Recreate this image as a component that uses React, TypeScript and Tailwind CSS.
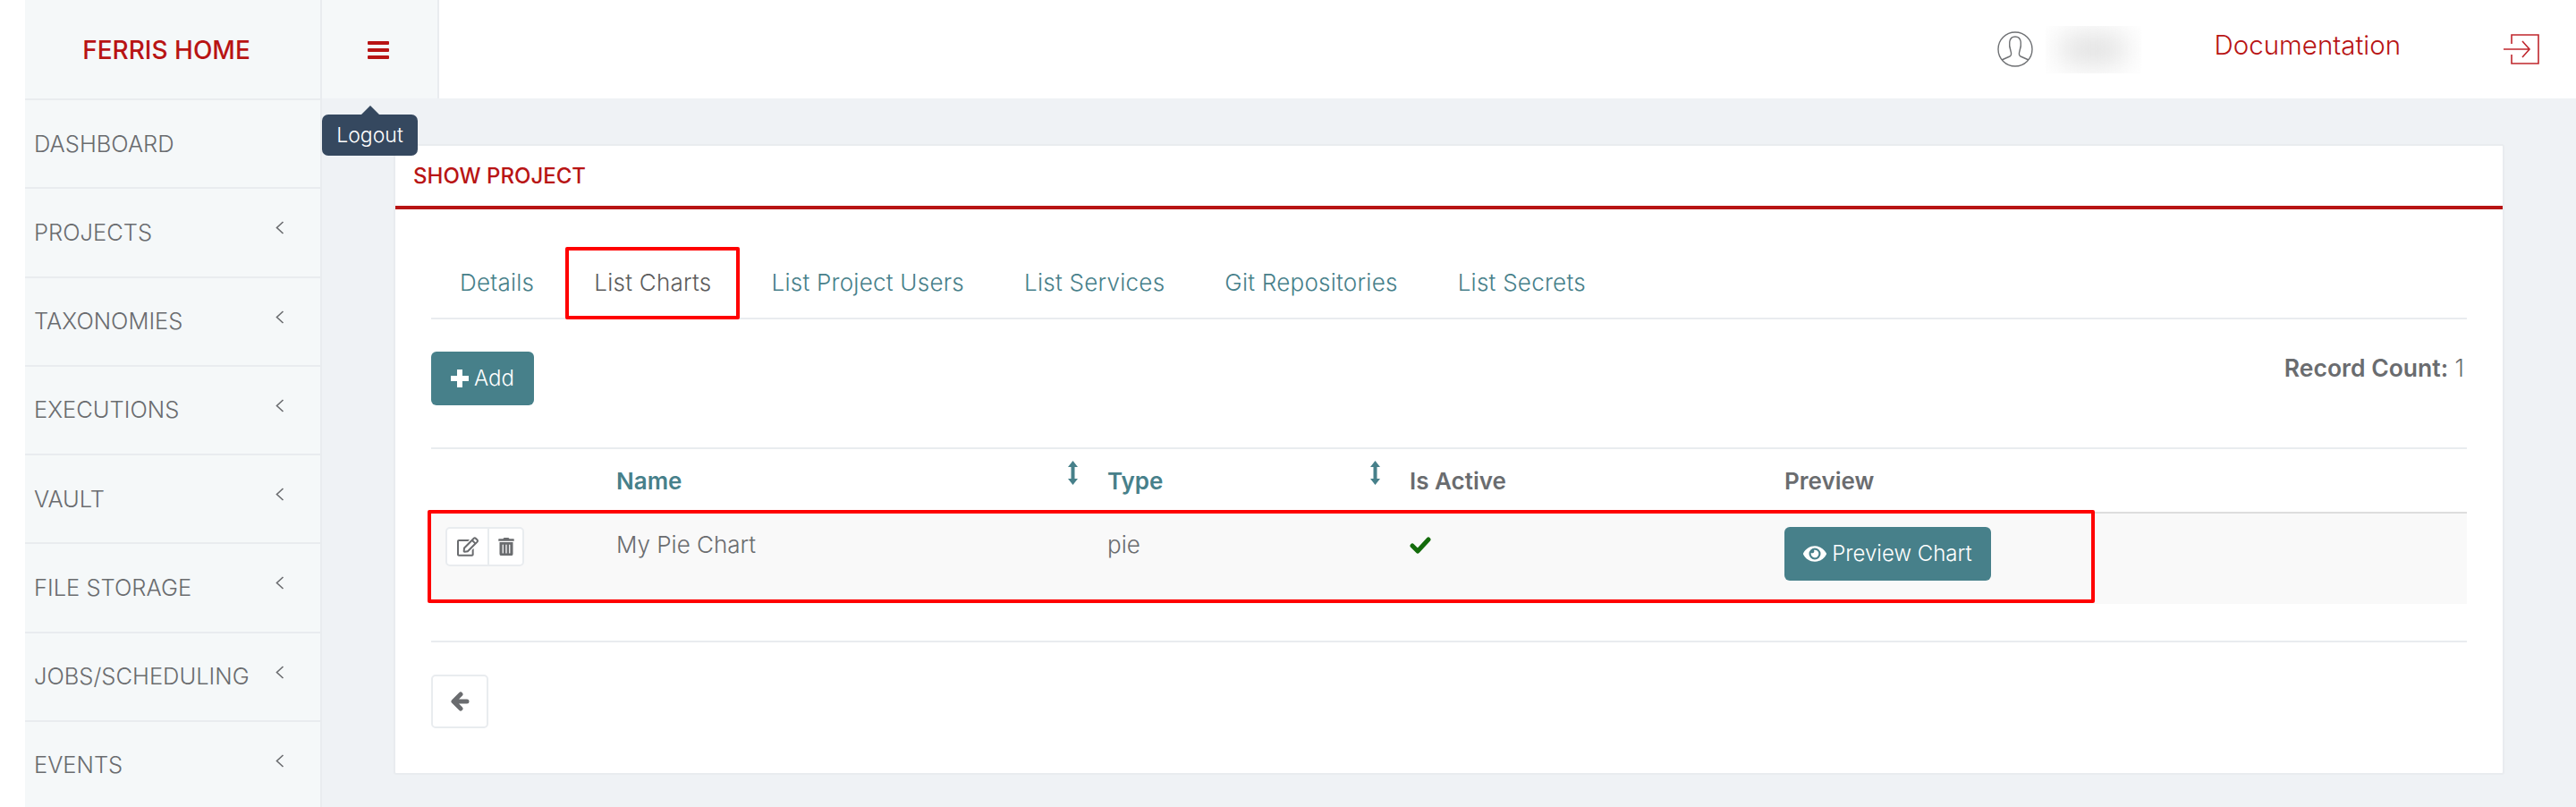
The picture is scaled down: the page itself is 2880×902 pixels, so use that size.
import { FC } from 'react';
import { FaEye, FaRegEdit, FaTrashAlt } from 'react-icons/fa';

const menuItems = [
  { label: 'DASHBOARD', hasChildren: false },
  { label: 'PROJECTS', hasChildren: true },
  { label: 'TAXONOMIES', hasChildren: true },
  { label: 'EXECUTIONS', hasChildren: true },
  { label: 'VAULT', hasChildren: true },
  { label: 'FILE STORAGE', hasChildren: true },
  { label: 'JOBS/SCHEDULING', hasChildren: true },
  { label: 'EVENTS', hasChildren: true },
];

const tabs = ['Details', 'List Charts', 'List Project Users', 'List Services', 'Git Repositories', 'List Secrets'];

const Chevron: FC = () => (
  <svg width="10" height="15" viewBox="0 0 10 15" fill="none" stroke="#6a6c6f" strokeWidth="1.6" className="mb-[10px] mr-[40px]">
    <path d="M8.5 1 L1.5 7.5 L8.5 14" />
  </svg>
);

const UserIcon: FC = () => (
  <svg width="40" height="40" viewBox="0 0 40 40" fill="none" stroke="#6f7174" strokeWidth="1.4">
    <circle cx="20" cy="20" r="19" />
    <path d="M5 32 L14 28 C16 27 16 25 15 22 C13 16 12 6 20 6 C28 6 27 16 25 22 C24 25 24 27 26 28 L35 32" />
  </svg>
);

const LogoutIcon: FC = () => (
  <svg width="40" height="34" viewBox="0 0 40 34" fill="none" stroke="#c0272d" strokeWidth="1.6">
    <path d="M9 11 V1 H39 V33 H9 V23" />
    <path d="M0 17 H29 M21 8 L29 17 L21 26" />
  </svg>
);

const SortIcon: FC = () => (
  <svg width="11" height="27" viewBox="0 0 11 27" fill="currentColor" className="mr-[7px] mt-[-3px]">
    <path d="M5.5 0 L11 7 H7.5 V20 H11 L5.5 27 L0 20 H3.5 V7 H0 Z" />
  </svg>
);

const PlusIcon: FC = () => (
  <svg width="20" height="20" viewBox="0 0 20 20" fill="none" stroke="currentColor" strokeWidth="6">
    <path d="M10 0 V20 M0 10 H20" />
  </svg>
);

const CheckIcon: FC = () => (
  <svg width="24" height="19" viewBox="0 0 24 19" fill="none" stroke="#146c0c" strokeWidth="5" strokeLinejoin="round" strokeLinecap="round">
    <path d="M3 10 L9 16 L21 3" />
  </svg>
);

const BackIcon: FC = () => (
  <svg width="21" height="22" viewBox="0 0 21 22" fill="none" stroke="#6a6c6f" strokeWidth="5" strokeLinejoin="round" strokeLinecap="round">
    <path d="M11 3 L3 11 L11 19 M4 11 H18" />
  </svg>
);

const App: FC = () => {
  return (
    <div className="flex h-[902px] w-[2880px] overflow-hidden bg-white pl-[28px] text-[26px] text-[#6a6c6f] [font-family:Inter,'Noto_Sans',sans-serif]">
      {/* Sidebar */}
      <aside className="w-[332px] shrink-0 border-r-2 border-[#e9ecef] bg-[#f5f8f9]">
        <div className="flex h-[112px] items-center justify-center border-b-2 border-[#e9ecef] pr-[14px] pt-[2px] text-[28px] font-medium text-[#b81414]">
          FERRIS HOME
        </div>
        {menuItems.map((item) => (
          <div key={item.label} className="flex h-[99.25px] items-center justify-between border-b-2 border-[#e9ecef] pl-[10px] text-[25.5px] font-light">
            <span>{item.label}</span>
            {item.hasChildren && <Chevron />}
          </div>
        ))}
      </aside>

      <div className="flex min-w-0 flex-1 flex-col bg-[#eff2f5]">
        {/* Top bar */}
        <header className="flex h-[110px] shrink-0 items-center bg-white">
          <div className="relative flex h-full w-[131px] items-center justify-center border-r-2 border-[#e9ecef] bg-[#f5f8f9] pr-[4px] pt-[2px]">
            <div className="flex w-[24px] flex-col gap-[4px]">
              <div className="h-[4px] rounded-[1px] bg-[#b81414]" />
              <div className="h-[4px] rounded-[1px] bg-[#b81414]" />
              <div className="h-[4px] rounded-[1px] bg-[#b81414]" />
            </div>
            {/* Tooltip */}
            <div className="absolute left-0 top-[128px] z-20 flex h-[46px] w-[107px] items-center justify-center rounded-[7px] bg-[#35485f] text-[23px] font-light text-white">
              Logout
              <div className="absolute left-[44px] top-[-10px] h-0 w-0 border-x-[10px] border-b-[10px] border-x-transparent border-b-[#35485f]" />
            </div>
          </div>
          <div className="ml-auto flex items-center">
            <UserIcon />
            <div className="ml-[14px] flex h-[53px] w-[107px] items-center justify-center overflow-hidden">
              <div className="h-[30px] w-[70px] bg-[#dcdcdc] blur-lg" />
            </div>
            <span className="mb-[9px] ml-[82px] text-[29.5px] font-light text-[#b81414]">Documentation</span>
            <div className="ml-[115px] mr-[41px]">
              <LogoutIcon />
            </div>
          </div>
        </header>

        {/* Content */}
        <main className="px-[80px] pt-[51px]">
          <div className="h-[705px] rounded-[3px] border-2 border-[#e9ecef] bg-white">
            <div className="flex h-[71px] items-center border-b-4 border-[#b81414] pl-[20px] text-[24px] font-medium leading-none text-[#b81414]">
              SHOW PROJECT
            </div>
            <div className="px-[40px]">
              {/* Tabs */}
              <div className="mt-[42px] flex h-[81px] items-center gap-[3px] border-b-2 border-[#e9ecef]">
                {tabs.map((tab) => (
                  <div
                    key={tab}
                    className={`relative flex h-full items-center px-[32px] font-light tracking-[0.25px] ${
                      tab === 'List Charts' ? 'text-[#5c5c5c]' : 'text-[#47808a]'
                    }`}
                  >
                    {tab}
                    {tab === 'List Charts' && (
                      <div className="absolute inset-x-0 -bottom-[2px] top-0 rounded-[2px] border-4 border-[#ff0000]" />
                    )}
                  </div>
                ))}
              </div>

              {/* Toolbar */}
              <div className="mt-[36px] flex items-start justify-between">
                <button className="flex h-[60px] w-[115px] items-center justify-center gap-[6px] rounded-[6px] bg-[#47808a] text-[24px] font-light text-white">
                  <PlusIcon />
                  Add
                </button>
                <div className="mr-[3px] mt-[-1px] text-[26.5px]">
                  <span className="font-semibold">Record Count:</span> <span className="font-light">1</span>
                </div>
              </div>

              {/* Table */}
              <div className="mt-[47px] border-t-2 border-[#e9ecef]">
                <div className="grid h-[70px] grid-cols-[207px_549px_338px_419px_1fr] pt-[16px] text-[26px] font-semibold">
                  <div />
                  <div className="flex justify-between pr-[26px] text-[#47808a]">
                    <span>Name</span>
                    <SortIcon />
                  </div>
                  <div className="flex justify-between pr-[26px] text-[#47808a]">
                    <span>Type</span>
                    <SortIcon />
                  </div>
                  <div>Is Active</div>
                  <div>Preview</div>
                </div>
                <div className="relative grid h-[103px] grid-cols-[207px_549px_338px_419px_1fr] border-t-2 border-[#dddddd] bg-[#f9f9f9] pt-[15px] font-light">
                  <div className="pl-[16px]">
                    <div className="flex h-[44px] w-[88px] rounded-[5px] border-2 border-[#e9ecef] bg-white">
                      <div className="flex w-[47px] items-center justify-center border-r-2 border-[#e9ecef]">
                        <FaRegEdit className="h-[24px] w-[24px]" />
                      </div>
                      <div className="flex flex-1 items-center justify-center">
                        <FaTrashAlt className="h-[20px] w-[18px]" />
                      </div>
                    </div>
                  </div>
                  <div>My Pie Chart</div>
                  <div>pie</div>
                  <div className="pt-[11px]">
                    <CheckIcon />
                  </div>
                  <div>
                    <button className="flex h-[60px] w-[231px] items-center justify-center gap-[6px] rounded-[6px] bg-[#47808a] text-[24px] text-white">
                      <FaEye className="h-[24px] w-[26px]" />
                      Preview Chart
                    </button>
                  </div>
                  <div className="absolute left-[-4px] top-[-4px] h-[104px] w-[1864px] rounded-[2px] border-4 border-[#ff0000]" />
                </div>
              </div>

              <div className="mt-[41px] border-t-2 border-[#e9ecef] pt-[36px]">
                <button className="flex h-[60px] w-[64px] items-center justify-center rounded-[5px] border-2 border-[#e9ecef] bg-white">
                  <BackIcon />
                </button>
              </div>
            </div>
          </div>
        </main>
      </div>
    </div>
  );
};

export default App;
